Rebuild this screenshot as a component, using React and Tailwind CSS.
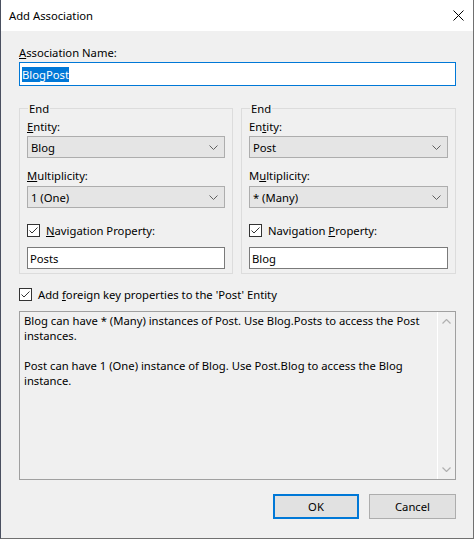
import React from "react";

const font = { fontFamily: '"Noto Sans", "Liberation Sans", Arial, sans-serif' };

const Chevron = () => (
  <svg width="9" height="5" viewBox="0 0 9 5" className="shrink-0">
    <polyline points="0.5,0.5 4.5,4.5 8.5,0.5" fill="none" stroke="#606060" strokeWidth="1" />
  </svg>
);

const Check = () => (
  <span className="w-[13px] h-[13px] shrink-0 border border-[#333333] bg-white flex items-center justify-center">
    <svg width="11" height="11" viewBox="0 0 11 11">
      <polyline points="1.5,5.5 4,8 9.5,2.5" fill="none" stroke="#333333" strokeWidth="1" />
    </svg>
  </span>
);

const Combo = ({ value }) => (
  <div className="h-[22px] flex items-center justify-between bg-[#e5e5e5] border border-[#adadad] pl-[3px] pr-[6px]">
    <span className="leading-[15px]">{value}</span>
    <Chevron />
  </div>
);

const EndGroup = ({ className, entity, mult, nav, entityLabel, multLabel, navLabel }) => (
  <fieldset className={`border border-[#dcdcdc] px-[7px] pb-[4px] ${className}`}>
    <legend className="ml-[1px] px-[1px] leading-[15px]">End</legend>
    <div className="pt-[3px] leading-[15px] mb-[2px]">{entityLabel}</div>
    <Combo value={entity} />
    <div className="mt-[10px] leading-[15px] mb-[3px]">{multLabel}</div>
    <Combo value={mult} />
    <div className="mt-[15px] flex items-center gap-[6px] leading-[15px]">
      <Check />
      <span>{navLabel}</span>
    </div>
    <div className="mt-[9px] h-[22px] border border-[#7a7a7a] bg-white pl-[2px] flex items-center leading-[15px]">
      {nav}
    </div>
  </fieldset>
);

const App = () => {
  return (
    <div
      className="w-[474px] h-[539px] flex flex-col bg-[#f0f0f0] border-l border-l-[#4a5060] border-r border-r-[#707070] border-b border-b-[#707070] text-[11.25px] text-black"
      style={font}
    >
      <div className="h-[31px] bg-white flex items-center justify-between pl-[8px] pr-[9px] shrink-0">
        <span className="leading-[15px]">Add Association</span>
        <svg width="11" height="11" viewBox="0 0 11 11">
          <path d="M0.5 0.5 L10.5 10.5 M10.5 0.5 L0.5 10.5" stroke="#000" strokeWidth="1" />
        </svg>
      </div>

      <div className="flex-1 flex flex-col pl-[18px] pr-[17px] pt-[14px]">
        <div className="leading-[15px] mb-[2px]">
          <u>A</u>ssociation Name:
        </div>
        <div className="h-[24px] border border-[#0078d7] bg-white flex items-center pl-[2px]">
          <span className="bg-[#0078d7] text-white leading-[15px]">BlogPost</span>
        </div>

        <div className="mt-[15px] flex gap-[8px]">
          <EndGroup
            className="w-[214px]"
            entityLabel={<><u>E</u>ntity:</>}
            multLabel={<><u>M</u>ultiplicity:</>}
            navLabel={<><u>N</u>avigation Property:</>}
            entity="Blog"
            mult="1 (One)"
            nav="Posts"
          />
          <EndGroup
            className="flex-1"
            entityLabel={<>En<u>t</u>ity:</>}
            multLabel={<>M<u>u</u>ltiplicity:</>}
            navLabel={<>Navigation <u>P</u>roperty:</>}
            entity="Post"
            mult="* (Many)"
            nav="Blog"
          />
        </div>

        <div className="mt-[13px] flex items-center gap-[6px] leading-[15px]">
          <Check />
          <span>
            Add <u>f</u>oreign key properties to the 'Post' Entity
          </span>
        </div>

        <div className="mt-[9px] h-[169px] border border-[#a0a0a0] flex">
          <div className="flex-1 pl-[4px] pt-[1px] leading-[15px]">
            <div>Blog can have * (Many) instances of Post. Use Blog.Posts to access the Post</div>
            <div>instances.</div>
            <div>&nbsp;</div>
            <div>Post can have 1 (One) instance of Blog. Use Post.Blog to access the Blog</div>
            <div>instance.</div>
          </div>
          <div className="w-[18px] border-l border-white flex flex-col items-center justify-between py-[7px]">
            <svg width="9" height="5" viewBox="0 0 9 5">
              <polyline points="0.5,4.5 4.5,0.5 8.5,4.5" fill="none" stroke="#b0b0b0" strokeWidth="1.2" />
            </svg>
            <svg width="9" height="5" viewBox="0 0 9 5">
              <polyline points="0.5,0.5 4.5,4.5 8.5,0.5" fill="none" stroke="#b0b0b0" strokeWidth="1.2" />
            </svg>
          </div>
        </div>

        <div className="mt-[14px] flex justify-end gap-[10px]">
          <button className="w-[86px] h-[25px] border-2 border-[#0078d7] bg-[#e1e1e1] leading-[15px]">
            OK
          </button>
          <button className="w-[87px] h-[25px] border border-[#adadad] bg-[#e1e1e1] leading-[15px]">
            Cancel
          </button>
        </div>
      </div>
    </div>
  );
};

export default App;
